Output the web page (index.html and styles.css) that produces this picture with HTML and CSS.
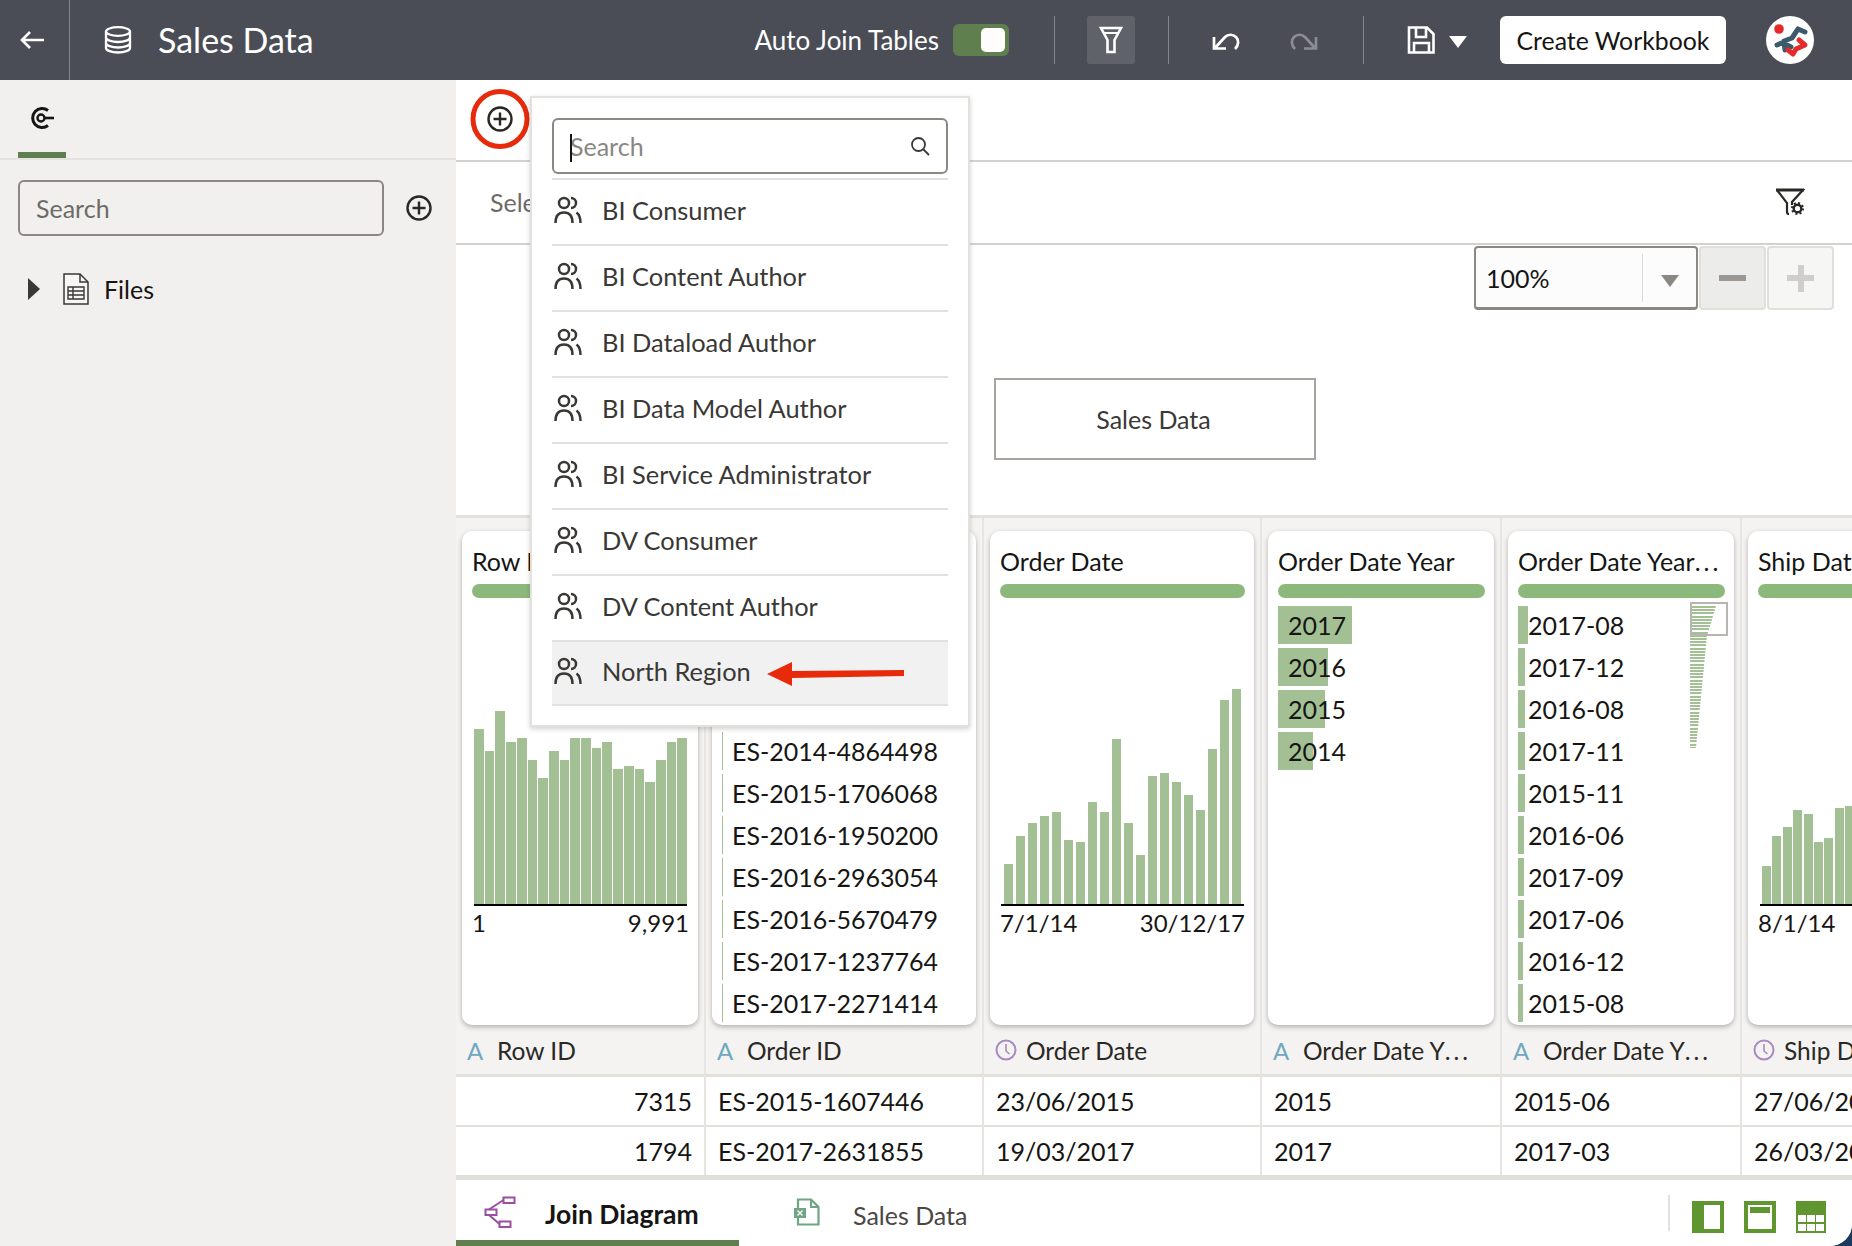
FILE: index.html
```html
<!DOCTYPE html>
<html lang="en">
<head>
<meta charset="utf-8">
<title>Sales Data</title>
<link rel="stylesheet" href="styles.css">
</head>
<body>
<svg class="defs" width="0" height="0" aria-hidden="true">
  <symbol id="people" viewBox="0 0 28 28"><g fill="none" stroke="currentColor" stroke-width="2.500"><circle cx="10" cy="7" r="5"/><path d="M1.500 27c0-7 3.200-10.500 8.500-10.500S18.500 20 18.500 27"/><path d="M17 2a5 5 0 0 1 0 10"/><path d="M22.500 16.500c2.600 2 4 5.500 4 10.500"/></g></symbol>
  <symbol id="plus" viewBox="0 0 26 26"><circle cx="13" cy="13" r="11.500" fill="none" stroke="currentColor" stroke-width="2.400"/><path d="M13 6.500v13M6.500 13h13" stroke="currentColor" stroke-width="2.400"/></symbol>
  <symbol id="clock" viewBox="0 0 22 22"><circle cx="11" cy="11" r="9.500" fill="none" stroke="currentColor" stroke-width="2"/><path d="M11 5v7l3.500 3" fill="none" stroke="currentColor" stroke-width="1.600"/></symbol>
</svg>
<div class="app">
  <header class="top">
    <div class="back">
      <svg width="26" height="20" viewBox="0 0 26 20"><path d="M25 10H3M11 2l-8 8 8 8" fill="none" stroke="#fff" stroke-width="2.600"/></svg>
    </div>
    <svg class="db" width="28" height="28" viewBox="0 0 28 28"><g fill="none" stroke="#fff" stroke-width="2.300"><ellipse cx="14" cy="5.500" rx="12" ry="4.300"/><path d="M2 5.500v16.500c0 2.500 5.400 4.500 12 4.500s12-2 12-4.500V5.500M2 11.500c0 2.500 5.400 4.500 12 4.500s12-2 12-4.500M2 17c0 2.500 5.400 4.500 12 4.500s12-2 12-4.500"/></g></svg>
    <h1 class="title">Sales Data</h1>
    <div class="top-right">
      <span class="auto">Auto Join Tables</span>
      <span class="toggle"><span class="knob"></span></span>
      <span class="vr vr-a"></span>
      <span class="filter-btn">
        <svg width="24" height="28" viewBox="0 0 24 28"><path d="M2 2h20l-6.500 12v12h-7V14z" fill="none" stroke="#fff" stroke-width="2.600"/><path d="M4 7h16" stroke="#fff" stroke-width="2"/></svg>
      </span>
      <span class="vr vr-b"></span>
      <svg class="undo" width="30" height="24" viewBox="0 0 30 24"><path d="M4 9v11.500h12M5 20 15 9c3-3 8-3 11 0s3 8-1 12" fill="none" stroke="#fff" stroke-width="2.700"/></svg>
      <svg class="redo" width="30" height="24" viewBox="0 0 30 24"><path d="M26 9v11.500H14M25 20 15 9C12 6 7 6 4 9s-3 8 1 12" fill="none" stroke="#8b8d92" stroke-width="2.700"/></svg>
      <span class="vr vr-c"></span>
      <svg class="save" width="28" height="28" viewBox="0 0 28 28"><path d="M2 1.500h18l6.500 6.500v18.500H2z" fill="none" stroke="#fff" stroke-width="2.600"/><path d="M9 1.500V11h10V1.500M7 26.500V17h15v9.500" fill="none" stroke="#fff" stroke-width="2.600"/></svg>
      <span class="caret"></span>
      <button class="create">Create Workbook</button>
      <svg class="avatar" width="48" height="48" viewBox="0 0 48 48"><circle cx="24" cy="24" r="24" fill="#fff"/><circle cx="13" cy="13" r="4.800" fill="#e62a2a"/><g fill="none" stroke-width="5" stroke-linecap="round" stroke-linejoin="round"><path d="M32 13l-6 9-8 3M32 13l7 3M11 29l7-3 1 8M19 28l6 3" stroke="#3d5a6c"/><path d="M33 24l6 5-9 4-3 5-5-4" stroke="#e62a2a"/></g></svg>
    </div>
  </header>

  <div class="body">
    <aside class="side">
      <div class="side-tabs">
        <span class="side-tab">
          <svg width="26" height="26" viewBox="0 0 26 26"><path d="M19 5.500a9.500 9.500 0 1 0 0 15" fill="none" stroke="#161513" stroke-width="3"/><circle cx="12" cy="13" r="3.500" fill="none" stroke="#161513" stroke-width="2.400"/><path d="M15 13h10" stroke="#161513" stroke-width="2.600"/></svg>
        </span>
      </div>
      <div class="side-search">
        <span class="search-box">Search</span>
        <svg class="ico-plus" width="26" height="26"><use href="#plus"/></svg>
      </div>
      <div class="tree">
        <span class="tree-arrow"></span>
        <svg class="doc" width="26" height="32" viewBox="0 0 26 32"><path d="M1 1h16l8 8v22H1z" fill="#f7f6f4" stroke="#3a3835" stroke-width="1.500"/><path d="M17 1v8h8" fill="none" stroke="#3a3835" stroke-width="1.500"/><path d="M5 14h16v12H5zM5 18h16M5 22h16M10 14v12" fill="none" stroke="#3a3835" stroke-width="1.400"/></svg>
        <span>Files</span>
      </div>
    </aside>

    <main class="main">
      <div class="bar-add">
        <svg class="ico-plus" width="26" height="26"><use href="#plus"/></svg>
      </div>
      <div class="bar-filter">
        <span class="sel">Select</span>
        <svg width="30" height="28" viewBox="0 0 30 28"><path d="M2 2h26L17 14v3M2 2l10 13v9c0 1 .6 2 2 2" fill="none" stroke="#2a2825" stroke-width="2.200"/><path d="M1 2h28" stroke="#2a2825" stroke-width="3"/><circle cx="22.500" cy="20.500" r="3.800" fill="#fff" stroke="#2a2825" stroke-width="2.400"/><circle cx="22.500" cy="20.500" r="5.500" fill="none" stroke="#2a2825" stroke-width="2" stroke-dasharray="2 2.300"/></svg>
      </div>
      <section class="canvas">
        <div class="zoomer">
          <div class="zoom-sel"><span class="zoom-val">100%</span><span class="zoom-caret"><i></i></span></div>
          <span class="zoom-btn minus"><b></b></span>
          <span class="zoom-btn plus"><b></b><b class="v"></b></span>
        </div>
        <div class="node">Sales Data</div>
      </section>

      <section class="cols">
        <div class="col c1">
          <div class="card-wrap"><div class="card">
            <div class="ct">Row ID</div><div class="gb"></div>
            <div class="hist tight">
              <i style="height:175px"></i><i style="height:153px"></i><i style="height:193px"></i><i style="height:162px"></i><i style="height:166px"></i><i style="height:144px"></i><i style="height:126px"></i><i style="height:153px"></i><i style="height:144px"></i><i style="height:166px"></i><i style="height:166px"></i><i style="height:156px"></i><i style="height:162px"></i><i style="height:135px"></i><i style="height:138px"></i><i style="height:135px"></i><i style="height:122px"></i><i style="height:144px"></i><i style="height:162px"></i><i style="height:166px"></i>
            </div>
            <div class="hl"><span>1</span><span>9,991</span></div>
          </div></div>
          <div class="hc"><span class="a">A</span><span class="hn">Row ID</span></div>
          <div class="dc r">7315</div><div class="dc r">1794</div>
        </div>

        <div class="col c2">
          <div class="card-wrap"><div class="card">
            <div class="ct">Order ID</div><div class="gb"></div>
            <div class="list ids">
              <div class="li"></div><div class="li"></div><div class="li"></div>
              <div class="li"><i style="width:1px"></i><span>ES-2014-4864498</span></div>
              <div class="li"><i style="width:1px"></i><span>ES-2015-1706068</span></div>
              <div class="li"><i style="width:1px"></i><span>ES-2016-1950200</span></div>
              <div class="li"><i style="width:1px"></i><span>ES-2016-2963054</span></div>
              <div class="li"><i style="width:1px"></i><span>ES-2016-5670479</span></div>
              <div class="li"><i style="width:1px"></i><span>ES-2017-1237764</span></div>
              <div class="li"><i style="width:1px"></i><span>ES-2017-2271414</span></div>
            </div>
          </div></div>
          <div class="hc"><span class="a">A</span><span class="hn">Order ID</span></div>
          <div class="dc">ES-2015-1607446</div><div class="dc">ES-2017-2631855</div>
        </div>

        <div class="col c3">
          <div class="card-wrap"><div class="card">
            <div class="ct">Order Date</div><div class="gb"></div>
            <div class="hist spaced">
              <i style="height:40px"></i><i style="height:68px"></i><i style="height:81px"></i><i style="height:88px"></i><i style="height:92px"></i><i style="height:64px"></i><i style="height:62px"></i><i style="height:102px"></i><i style="height:92px"></i><i style="height:165px"></i><i style="height:81px"></i><i style="height:49px"></i><i style="height:128px"></i><i style="height:131px"></i><i style="height:122px"></i><i style="height:109px"></i><i style="height:94px"></i><i style="height:155px"></i><i style="height:204px"></i><i style="height:215px"></i>
            </div>
            <div class="hl"><span>7/1/14</span><span>30/12/17</span></div>
          </div></div>
          <div class="hc"><svg class="clk" width="22" height="22"><use href="#clock"/></svg><span class="hn">Order Date</span></div>
          <div class="dc">23/06/2015</div><div class="dc">19/03/2017</div>
        </div>

        <div class="col c4">
          <div class="card-wrap"><div class="card">
            <div class="ct">Order Date Year</div><div class="gb"></div>
            <div class="list years">
              <div class="li"><i style="width:74px"></i><span>2017</span></div>
              <div class="li"><i style="width:50px"></i><span>2016</span></div>
              <div class="li"><i style="width:47px"></i><span>2015</span></div>
              <div class="li"><i style="width:35px"></i><span>2014</span></div>
            </div>
          </div></div>
          <div class="hc"><span class="a">A</span><span class="hn">Order Date Y<span class="dots">...</span></span></div>
          <div class="dc">2015</div><div class="dc">2017</div>
        </div>

        <div class="col c5">
          <div class="card-wrap"><div class="card">
            <div class="ct">Order Date Year<span class="dots">...</span></div><div class="gb"></div>
            <div class="list months">
              <div class="li"><i style="width:10px"></i><span>2017-08</span></div>
              <div class="li"><i style="width:7px"></i><span>2017-12</span></div>
              <div class="li"><i style="width:7px"></i><span>2016-08</span></div>
              <div class="li"><i style="width:7px"></i><span>2017-11</span></div>
              <div class="li"><i style="width:7px"></i><span>2015-11</span></div>
              <div class="li"><i style="width:6px"></i><span>2016-06</span></div>
              <div class="li"><i style="width:6px"></i><span>2017-09</span></div>
              <div class="li"><i style="width:6px"></i><span>2017-06</span></div>
              <div class="li"><i style="width:5px"></i><span>2016-12</span></div>
              <div class="li"><i style="width:5px"></i><span>2015-08</span></div>
            </div>
            <div class="mini"><div class="mini-bars"></div><div class="mini-view"></div></div>
          </div></div>
          <div class="hc"><span class="a">A</span><span class="hn">Order Date Y<span class="dots">...</span></span></div>
          <div class="dc">2015-06</div><div class="dc">2017-03</div>
        </div>

        <div class="col c6">
          <div class="card-wrap"><div class="card">
            <div class="ct">Ship Date</div><div class="gb"></div>
            <div class="hist fixed">
              <i style="height:38px"></i><i style="height:68px"></i><i style="height:77px"></i><i style="height:94px"></i><i style="height:90px"></i><i style="height:62px"></i><i style="height:66px"></i><i style="height:96px"></i><i style="height:98px"></i>
            </div>
            <div class="hl"><span>8/1/14</span></div>
          </div></div>
          <div class="hc"><svg class="clk" width="22" height="22"><use href="#clock"/></svg><span class="hn">Ship Date</span></div>
          <div class="dc">27/06/2015</div><div class="dc">26/03/2017</div>
        </div>
      </section>

      <footer class="tabs">
        <div class="tab on">
          <svg width="32" height="32" viewBox="0 0 32 32"><g fill="none" stroke="#9a4fa0" stroke-width="2"><rect x="19.500" y="1.500" width="11" height="5.500"/><rect x="1.500" y="13.500" width="11" height="5.500"/><rect x="15.500" y="25.500" width="11" height="5.500"/><path d="M5 13.500 19.500 4M5 19l10.500 9"/></g></svg>
          <span>Join Diagram</span>
        </div>
        <div class="tab sd">
          <svg width="26" height="28" viewBox="0 0 26 28"><path d="M4 1.500h13l7.500 7.500v17.500H4z" fill="#fff" stroke="#6ea583" stroke-width="2.200"/><path d="M17 1.500V9h7.500" fill="none" stroke="#6ea583" stroke-width="2"/><rect x="0" y="10" width="12" height="10" fill="#6ea583"/><path d="m3.500 12.500 5 5m0-5-5 5" stroke="#fff" stroke-width="1.400"/></svg>
          <span>Sales Data</span>
        </div>
        <div class="views">
          <svg width="32" height="32" viewBox="0 0 32 32"><path fill-rule="evenodd" d="M0 0h32v32H0zM12 4v24h16V4z" fill="#5f9630"/></svg>
          <svg width="32" height="32" viewBox="0 0 32 32"><path fill-rule="evenodd" d="M0 0h32v32H0zM4 4v24h24V4z" fill="#5f9630"/><rect x="6" y="6" width="20" height="6" fill="#5f9630"/></svg>
          <svg width="30" height="32" viewBox="0 0 30 32"><rect width="30" height="32" fill="#5f9630"/><g fill="#fff"><rect x="2" y="14" width="8" height="7"/><rect x="11" y="14" width="8" height="7"/><rect x="20" y="14" width="8" height="7"/><rect x="2" y="23" width="8" height="7"/><rect x="11" y="23" width="8" height="7"/><rect x="20" y="23" width="8" height="7"/></g></svg>
        </div>
      </footer>

      <svg class="red-ring" width="62" height="64" viewBox="0 0 62 64"><ellipse cx="31" cy="32" rx="27" ry="27.500" fill="none" stroke="#e62a0a" stroke-width="5"/></svg>

      <div class="pop">
        <div class="pop-search">
          <span class="cursor"></span><span class="ph">Search</span>
          <svg width="20" height="20" viewBox="0 0 20 20"><circle cx="8.500" cy="8.500" r="6.500" fill="none" stroke="#3a3835" stroke-width="1.800"/><path d="m13 13 6 6" stroke="#3a3835" stroke-width="1.800"/></svg>
        </div>
        <ul class="pop-list">
          <li><svg width="28" height="28"><use href="#people"/></svg>BI Consumer</li>
          <li><svg width="28" height="28"><use href="#people"/></svg>BI Content Author</li>
          <li><svg width="28" height="28"><use href="#people"/></svg>BI Dataload Author</li>
          <li><svg width="28" height="28"><use href="#people"/></svg>BI Data Model Author</li>
          <li><svg width="28" height="28"><use href="#people"/></svg>BI Service Administrator</li>
          <li><svg width="28" height="28"><use href="#people"/></svg>DV Consumer</li>
          <li><svg width="28" height="28"><use href="#people"/></svg>DV Content Author</li>
          <li class="hot"><svg width="28" height="28"><use href="#people"/></svg>North Region
            <svg class="arrow" width="140" height="26" viewBox="0 0 140 26"><path d="M1 13 26 1v9l112-1v6L26 17v8z" fill="#e62a0a"/></svg>
          </li>
        </ul>
      </div>
    </main>
  </div>
</div>
</body>
</html>
```
FILE: styles.css
```css
* { box-sizing: border-box; }
html, body { margin: 0; height: 100%; }
body { font-family: Lato, "Noto Sans", sans-serif; color: #161513; overflow: hidden; background: #1c3a5e; }
.defs { position: absolute; }
.app { display: flex; flex-direction: column; width: 1852px; height: 1246px; background: #fff; border-bottom-right-radius: 22px; overflow: hidden; }

/* top bar */
.top { display: flex; align-items: center; height: 80px; background: #4a4d55; color: #fff; flex: none; }
.back { width: 70px; height: 80px; display: flex; align-items: center; padding-left: 19px; border-right: 1px solid #85878c; }
.db { margin-left: 34px; }
.title { margin: 0 0 0 26px; font-size: 34px; font-weight: 400; line-height: 1; }
.top-right { margin-left: auto; display: flex; align-items: center; height: 48px; padding-right: 38px; }
.auto { font-size: 26px; }
.toggle { width: 56px; height: 32px; margin-left: 14px; background: #5f7f4f; border-radius: 6px; display: flex; align-items: center; justify-content: flex-end; padding-right: 4px; }
.knob { width: 24px; height: 24px; background: #fffdfb; border-radius: 5px; }
.vr { width: 1px; height: 48px; background: #85878c; }
.vr-a { margin-left: 45px; }
.filter-btn { width: 48px; height: 48px; margin-left: 32px; background: #5f6268; border-radius: 3px; display: flex; align-items: center; justify-content: center; }
.vr-b { margin-left: 33px; }
.undo { margin-left: 41px; }
.redo { margin-left: 50px; }
.vr-c { margin-left: 43px; }
.save { margin-left: 43px; }
.caret { width: 0; height: 0; margin: 4px 0 0 14px; border-left: 9px solid transparent; border-right: 9px solid transparent; border-top: 12px solid #fff; }
.create { margin-left: 33px; width: 226px; height: 48px; background: #fff; border: 0; border-radius: 6px; color: #161513; font: 400 24.800px Lato, sans-serif; padding: 0; }
.avatar { margin-left: 40px; }

.body { flex: 1; display: flex; min-height: 0; }

/* side panel */
.side { width: 456px; flex: none; background: #f1f0ee; }
.side-tabs { height: 80px; border-bottom: 2px solid #e4e3e0; padding-left: 18px; }
.side-tab { display: block; width: 48px; height: 78px; padding: 25px 0 0 11px; border-bottom: 6px solid #5f7f4f; }
.side-search { display: flex; align-items: center; margin-top: 20px; padding-left: 18px; }
.search-box { width: 366px; height: 56px; border: 2px solid #8b8782; border-radius: 6px; display: flex; align-items: center; padding-left: 16px; font-size: 25px; color: #6e6b67; }
.ico-plus { color: #2a2825; flex: none; }
.side-search .ico-plus { margin-left: 22px; }
.tree { display: flex; align-items: center; margin-top: 37px; padding-left: 28px; font-size: 25px; height: 32px; }
.tree-arrow { width: 0; height: 0; border-top: 11px solid transparent; border-bottom: 11px solid transparent; border-left: 12px solid #3a3835; }
.doc { margin: 0 15px 0 23px; }

/* main */
.main { flex: 1; min-width: 0; position: relative; display: flex; flex-direction: column; }
.bar-add { height: 82px; border-bottom: 2px solid #d4d2ce; padding: 26px 0 0 31px; flex: none; }
.bar-filter { height: 83px; border-bottom: 2px solid #d4d2ce; display: flex; align-items: center; justify-content: space-between; padding: 0 47px 2px 34px; flex: none; }
.sel { font-size: 25px; color: #6e6b67; }
.canvas { height: 273px; position: relative; flex: none; border-bottom: 3px solid #e2e1de; padding: 1px 18px 0 0; }
.zoomer { display: flex; justify-content: flex-end; gap: 1px; }
.zoom-sel { width: 224px; height: 64px; border: 2px solid #8b8782; border-bottom-width: 3px; border-radius: 4px; background: #fcfcfc; display: flex; align-items: center; justify-content: space-between; font-size: 25px; padding-left: 10px; }
.zoom-caret { width: 54px; height: 48px; border-left: 1px solid #dddbd8; display: flex; align-items: center; justify-content: center; }
.zoom-caret i { width: 0; height: 0; margin-top: 6px; border-left: 9px solid transparent; border-right: 9px solid transparent; border-top: 12px solid #8b8782; }
.zoom-btn { width: 67px; height: 64px; position: relative; display: flex; align-items: center; justify-content: center; border: 2px solid #e0dfdc; border-radius: 4px; }
.zoom-btn.minus { background: #ececea; }
.zoom-btn.plus { background: #f6f6f5; }
.zoom-btn b { position: absolute; width: 27px; height: 6px; background: #9b9894; }
.zoom-btn.plus b { background: #cfcecb; }
.zoom-btn.plus b.v { width: 6px; height: 27px; }
.node { position: absolute; left: 538px; top: 133px; width: 322px; height: 82px; border: 2px solid #a8a5a1; display: flex; align-items: center; justify-content: center; font-size: 25px; color: #3a3835; background: #fff; padding-right: 3px; }

/* columns */
.cols { flex: 1; min-height: 0; display: flex; overflow: hidden; background: #f4f3f1; border-bottom: 5px solid #dfdfdb; }
.col { flex: none; display: flex; flex-direction: column; border-right: 2px solid #e6e5e2; }
.c1 { width: 250px; } .c2 { width: 278px; } .c3 { width: 278px; } .c4 { width: 240px; } .c5 { width: 240px; } .c6 { width: 200px; border-right: 0; }
.card-wrap { height: 507px; padding: 13px 6px 0 6px; flex: none; }
.card { position: relative; height: 494px; background: #fff; border-radius: 10px; box-shadow: 0 2px 5px rgba(0,0,0,.28); padding: 10px 9px 0 10px; overflow: hidden; }
.c6 .card { width: 220px; }
.ct { font-size: 25px; line-height: 40px; height: 40px; white-space: nowrap; }
.dots { letter-spacing: 3px; }
.gb { height: 14px; margin-top: 3px; background: #8cb87c; border-radius: 7px; }
.hist { height: 308px; display: flex; align-items: flex-end; border-bottom: 2px solid #000; margin: 0 2px; }
.hist i { display: block; background: #a2c094; flex: 1; }
.tight { gap: 1px; }
.spaced { gap: 3px; padding: 0 3px; margin: 0 1px; }
.fixed { gap: 1.400px; padding-left: 2px; }
.fixed i { flex: 0 0 9px; }
.hl { display: flex; justify-content: space-between; font-size: 24px; line-height: 30px; padding-top: 2px; }
.list { margin-top: 8px; display: flex; flex-direction: column; gap: 4px; }
.li { position: relative; height: 38px; font-size: 25px; line-height: 38px; white-space: nowrap; }
.li i { position: absolute; left: 0; top: 0; bottom: 0; background: #a2c094; }
.li span { position: relative; padding-left: 10px; display: block; }
.mini { position: absolute; left: 182px; top: 71px; width: 38px; height: 146px; }
.mini-bars { position: absolute; left: 0; top: 4px; width: 27px; height: 142px; background: repeating-linear-gradient(#a2c094 0 2px, transparent 2px 3.200px); clip-path: polygon(0 0, 26px 0, 17px 30px, 15px 50px, 6px 142px, 0 142px); }
.mini-view { position: absolute; left: 0; top: 0; width: 38px; height: 34px; border: 2px solid #b8b5b1; }
.hc { height: 52px; flex: none; display: flex; align-items: center; background: #f4f3f1; border-bottom: 3px solid #e2e1de; font-size: 24.500px; padding: 1px 0 0 11px; white-space: nowrap; }
.hc .a { color: #6fa8c0; width: 30px; font-size: 24px; flex: none; }
.clk { color: #a98bbf; margin-right: 9px; flex: none; }
.hn { color: #2a2825; }
.dc { height: 50px; flex: none; display: flex; align-items: center; background: #fff; border-bottom: 2px solid #e2e1de; font-size: 25px; padding: 0 12px; white-space: nowrap; overflow: hidden; }
.dc:last-child { border-bottom: 0; height: 48px; }
.dc.r { justify-content: flex-end; }

/* bottom tabs */
.tabs { height: 66px; flex: none; display: flex; align-items: center; background: #fff; font-size: 25px; }
.tab { height: 66px; display: flex; align-items: center; }
.tab svg { margin-bottom: 5px; }
.tab.on { width: 283px; padding: 8px 0 0 28px; gap: 29px; font-weight: 700; font-size: 26.500px; color: #161513; border-bottom: 6px solid #5f7f4f; }
.tab.sd { margin-left: 55px; gap: 33px; color: #4a4744; padding-top: 3px; }
.views { margin-left: auto; display: flex; gap: 20px; height: 36px; padding: 6px 26px 0 22px; border-left: 2px solid #e2e1de; align-items: flex-start; }

/* overlays */
.red-ring { position: absolute; left: 13px; top: 7px; }
.pop { position: absolute; left: 74px; top: 16px; width: 440px; height: 631px; background: #fff; border: 2px solid #e2e1de; box-shadow: 0 2px 5px rgba(0,0,0,.18); padding: 20px 20px 0; }
.pop-search { height: 56px; border: 2px solid #8b8782; border-radius: 6px; display: flex; align-items: center; padding: 0 16px; position: relative; font-size: 25px; color: #8a8783; justify-content: space-between; }
.cursor { position: absolute; left: 16px; top: 14px; width: 2px; height: 28px; background: #161513; }
.ph { margin-left: 0; }
.pop-list { list-style: none; margin: 4px 0 0; padding: 0; }
.pop-list li { position: relative; height: 66px; border-top: 2px solid #e2e1de; display: flex; align-items: center; gap: 20px; font-size: 25.400px; color: #3a3835; padding: 0 0 5px 2px; }
.pop-list li.hot { background: #f1f1f1; border-bottom: 2px solid #e2e1de; }
.arrow { position: absolute; left: 214px; top: 19px; }
```
